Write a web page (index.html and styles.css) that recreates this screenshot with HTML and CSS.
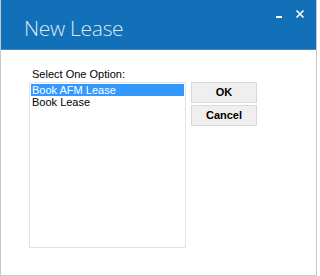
FILE: index.html
```html
<!DOCTYPE html>
<html>
<head>
<meta charset="utf-8">
<link rel="stylesheet" href="styles.css">
</head>
<body>
<div class="window">
  <div class="titlebar">
    <div class="title">New Lease</div>
    <div class="controls">
      <svg class="ctl" width="10" height="10" viewBox="0 0 10 10"><rect x="2" y="7" width="6" height="2" fill="#fff"/></svg>
      <svg class="ctl" width="10" height="10" viewBox="0 0 10 10"><path d="M1.5 1.5 L8.5 8.5 M8.5 1.5 L1.5 8.5" stroke="#fff" stroke-width="1.6"/></svg>
    </div>
  </div>
  <div class="content">
    <div class="left">
      <div class="label">Select One Option:</div>
      <div class="listbox">
        <div class="item selected">Book AFM Lease</div>
        <div class="item">Book Lease</div>
      </div>
    </div>
    <div class="buttons">
      <div class="btn">OK</div>
      <div class="btn">Cancel</div>
    </div>
  </div>
</div>
</body>
</html>
```
FILE: styles.css
```css
html, body { margin: 0; padding: 0; background: #fff; }
.window {
  width: 317px; height: 276px; box-sizing: border-box;
  border: 1px solid #c9c9c9; border-top: none;
  font-family: "Liberation Sans", Arial, sans-serif; font-size: 11px; color: #000;
}
.titlebar {
  height: 50px; background: #1170b8; border-bottom: 1px solid #3f8cc8;
  box-sizing: border-box; display: flex; justify-content: space-between;
}
.title {
  font-family: "Open Sans", sans-serif; font-weight: 300; font-size: 21px;
  color: #dce9f5; padding: 15px 0 0 23px; line-height: 26px; letter-spacing: -0.3px;
}
.controls { display: flex; gap: 11px; padding: 9px 11px 0 0; }
.ctl { display: block; }
.content { display: flex; padding: 17px 0 0 28px; gap: 5px; }
.left { display: flex; flex-direction: column; }
.label { padding-left: 3px; height: 14px; line-height: 14px; margin-bottom: 1px; }
.listbox {
  width: 157px; height: 166px; box-sizing: border-box; border: 1px solid #e3e3e3;
  padding: 1px;
}
.item { height: 12px; line-height: 12px; padding-left: 1px; }
.item.selected { background: #3399ff; color: #fff; }
.buttons { display: flex; flex-direction: column; gap: 2px; padding-top: 15px; }
.btn {
  width: 66px; height: 21px; box-sizing: border-box; border: 1px solid #d9d9d9;
  background: #efefef; font-weight: bold; text-align: center; line-height: 19px;
}
```
